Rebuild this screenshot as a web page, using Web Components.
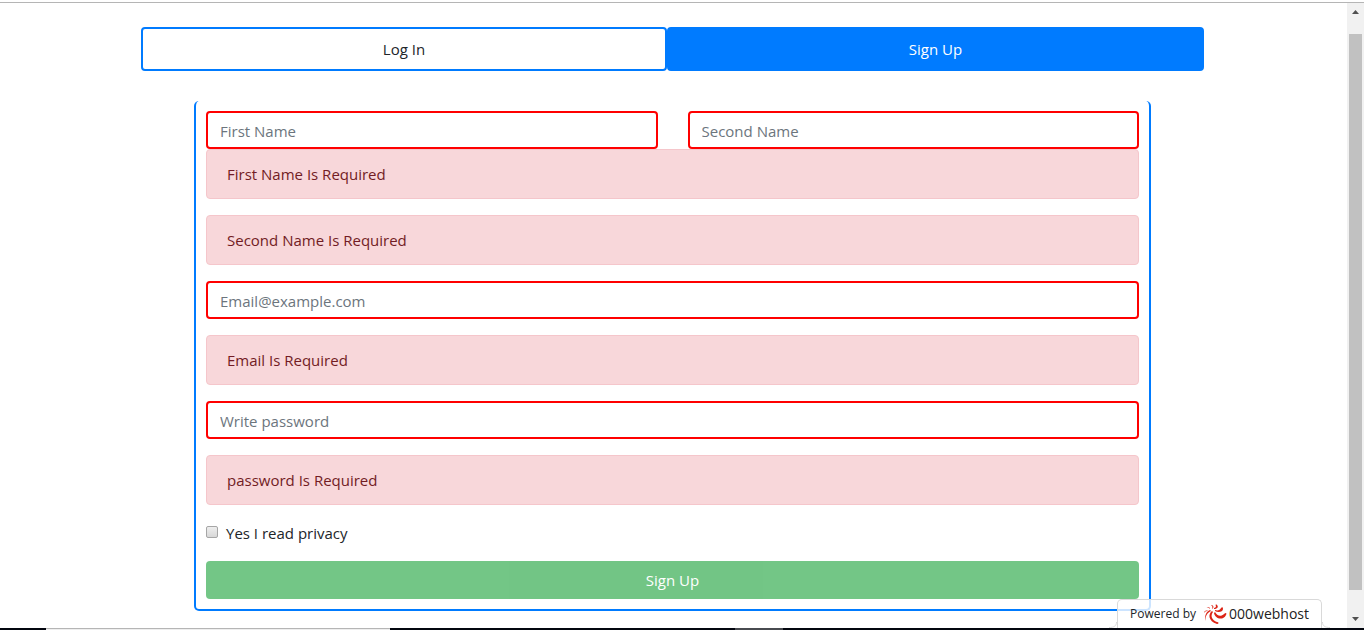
<!DOCTYPE html>
<html lang="en">
<head>
<meta charset="utf-8">
<title>Sign Up</title>
<style>
  html, body { margin: 0; height: 100%; }
  body { background: #fff; color: #212529; font: 400 15px/24px "Open Sans", "Noto Sans", sans-serif; overflow: hidden; }
</style>
</head>
<body>
<app-window>
  <auth-tabs></auth-tabs>
  <signup-form></signup-form>
  <host-badge slot="badge"></host-badge>
</app-window>

<script>
const define = (name, html, setup) => {
  const template = document.createElement('template');
  template.innerHTML = html;
  customElements.define(name, class extends HTMLElement {
    constructor() {
      super();
      this.attachShadow({ mode: 'open' }).append(template.content.cloneNode(true));
    }
    connectedCallback() { if (setup) setup(this, this.shadowRoot); }
  });
};

define('page-scrollbar', `
<style>
  :host { display: flex; flex-direction: column; align-items: center; justify-content: space-between; background: #f1f1f1; }
  svg { display: block; width: 17px; height: 17px; flex: none; fill: #505050; }
  .track { flex: 1; width: 13px; padding: 14px 0 21px; box-sizing: border-box; display: flex; }
  .thumb { flex: 1; background: #c1c1c1; }
</style>
<svg viewBox="0 0 17 17"><path d="M5 11h7L8.500 7z"/></svg>
<div class="track"><div class="thumb"></div></div>
<svg viewBox="0 0 17 17"><path d="M5 6h7L8.500 10z"/></svg>`);

define('task-strip', `
<style>
  :host { display: flex; height: 2px; background: #03060f; }
  .search { margin-left: 46px; width: 344px; background: linear-gradient(#b5b5b5 50%, #eee 50%); }
  .active { margin-left: 345px; width: 48px; background: #484b50; }
</style>
<div class="search"></div><div class="active"></div>`);

define('app-window', `
<style>
  :host { display: flex; flex-direction: column; height: 100vh; }
  header { height: 2px; border-bottom: 1px solid #b5b5b5; flex: none; }
  .view { flex: 1; min-height: 0; display: grid; grid-template-columns: 1fr 17px; position: relative; }
  main { overflow: hidden; padding: 24px 143px 0 141px; }
  ::slotted([slot=badge]) { position: absolute; right: 34px; bottom: 0; }
</style>
<header></header>
<div class="view">
  <main><slot></slot></main>
  <page-scrollbar></page-scrollbar>
  <slot name="badge"></slot>
</div>
<task-strip></task-strip>`);

define('auth-tabs', `
<style>
  :host { display: block; }
  nav { display: flex; }
  a { flex: 1 1 auto; padding: 8px 16px; border: 2px solid #007bff; border-radius: 4px; text-align: center; text-decoration: none; color: #212529; }
  a[aria-current] { background: #007bff; color: #fff; }
</style>
<nav><a href="#login">Log In</a><a href="#signup" aria-current="page">Sign Up</a></nav>`);

define('text-field', `
<style>
  :host { display: block; }
  input { display: block; box-sizing: border-box; width: 100%; height: 38px; margin: 0; padding: 7px 12px 5px; border: 2px solid #f00; border-radius: 4px; background: #fff; color: #495057; font: inherit; outline: none; }
  input::placeholder { color: #6c757d; opacity: 1; }
</style>
<input>`, (host, root) => {
  const input = root.querySelector('input');
  const hint = host.getAttribute('hint');
  input.type = host.getAttribute('type') || 'text';
  input.placeholder = hint;
  input.setAttribute('aria-label', hint);
});

define('alert-box', `
<style>
  :host { display: block; padding: 12px 20px; border: 1px solid #f5c6cb; border-radius: 4px; background: #f8d7da; color: #721c24; }
</style>
<slot></slot>`, host => host.setAttribute('role', 'alert'));

define('signup-form', `
<style>
  :host { display: block; margin: 30px 53px 0; }
  form { display: flex; flex-direction: column; gap: 16px; padding: 10px; border: 2px solid #007bff; border-top: 0; border-radius: 5px; }
  .names { display: grid; grid-template-columns: 1fr 1fr; column-gap: 30px; }
  .names alert-box { grid-column: 1 / -1; }
  .privacy { display: flex; align-items: center; gap: 8px; }
  input { appearance: none; box-sizing: border-box; width: 12px; height: 12px; margin: 0 0 2px; border: 1px solid #a6a6a6; border-radius: 2px; background: linear-gradient(#eee, #d8d8d8); }
  input:checked { background: #007bff; }
  button { height: 38px; padding: 0 12px; border: 0; border-radius: 4px; background: #28a745; color: #fff; font: inherit; opacity: .65; }
</style>
<form>
  <div class="names">
    <text-field hint="First Name"></text-field>
    <text-field hint="Second Name"></text-field>
    <alert-box>First Name Is Required</alert-box>
  </div>
  <alert-box>Second Name Is Required</alert-box>
  <text-field type="email" hint="Email@example.com"></text-field>
  <alert-box>Email Is Required</alert-box>
  <text-field type="password" hint="Write password"></text-field>
  <alert-box>password Is Required</alert-box>
  <div class="privacy"><input type="checkbox" id="privacy"><label for="privacy">Yes I read privacy</label></div>
  <button type="submit" disabled>Sign Up</button>
</form>`);

define('host-badge', `
<style>
  :host { display: flex; align-items: flex-end; }
  a { display: flex; align-items: center; box-sizing: border-box; height: 29px; padding: 0 12px; border: 1px solid #d9d9d9; border-bottom: 0; border-radius: 5px 5px 0 0; background: rgba(255, 255, 255, .8); color: #212529; text-decoration: none; white-space: nowrap; font-size: 12px; line-height: 28px; }
  svg.logo { width: 24px; height: 22px; margin: 0 2px 0 7px; flex: none; }
  svg.foot { width: 8px; height: 6px; flex: none; fill: none; stroke: #d9d9d9; }
  b { font: 500 14px/28px "Open Sans", sans-serif; color: #222; }
</style>
<svg class="foot" viewBox="0 0 8 6"><path d="M0 5.500C5 5.500 7.500 4 7.500 0"/></svg>
<a href="#host"><span>Powered by</span>
  <svg class="logo" viewBox="0 0 24 22" fill="#dc2416">
    <path d="M7 7C3 9 1 13 3 18 2 13 4 10 8 8z"/>
    <path d="M9 8C5 11 5 18 14 21 16 21 16 19 14 19 9 17 7 13 10 9z"/>
    <path d="M11 10C12 16 20 18 23 12 24 10 23 9 21 11 18 14 14 13 12 9z"/>
    <path d="M12 8C15 10 20 9 20 6 20 4 19 4 18 5 17 7 15 8 12 7z"/>
    <path d="M11 6C14 6 16 4 14 2 13 1 12 2 13 3 13 4 12 5 11 5z"/>
    <path d="M9 6C11 5 11 3 9 2 8 2 8 3 9 3 10 4 9 5 9 6zM7 6C7 4 5 3 3 5 5 4 6 5 7 6zM5 8C3 7 1 8 1 10 2 8 4 8 5 8z"/>
  </svg><b>000webhost</b></a>
<svg class="foot" viewBox="0 0 8 6"><path d="M8 5.500C3 5.500 .5 4 .5 0"/></svg>`);
</script>
</body>
</html>
